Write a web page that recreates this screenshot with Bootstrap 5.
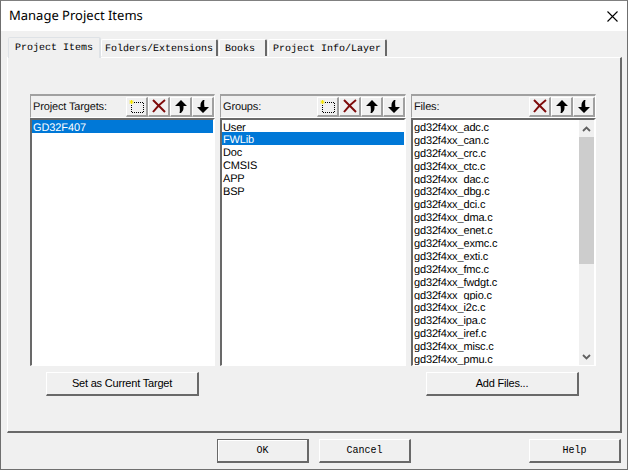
<!DOCTYPE html>
<html lang="en">
<head>
<meta charset="UTF-8">
<title>Manage Project Items</title>
<link href="https://cdn.jsdelivr.net/npm/bootstrap@5.3.0/dist/css/bootstrap.min.css" rel="stylesheet">
<style>
html, body { margin: 0; background: #f0f0f0; }
.dlg { width: 628px; height: 470px; overflow: hidden; background: #f0f0f0; border: 1px solid #6f6f6f; border-top-color: #808080; font-family: "Liberation Sans", sans-serif; font-size: 11px; letter-spacing: -.15px; text-rendering: geometricPrecision; color: #000; }
.dlg-title { height: 30px; background: #fff; font-family: "Noto Sans", sans-serif; font-size: 13px; letter-spacing: 0; padding: 0 8px; flex: none; }
.dlg-x { width: 13px; height: 13px; }
.tabbar { height: 26px; padding: 6px 0 0 7px; border: 0; flex: none; align-items: flex-end; position: relative; z-index: 1; }
.tabbar .nav-link { font-family: "Liberation Mono", monospace; font-size: 10px; letter-spacing: 0; line-height: 13px; color: #000; padding: 3px 3px 0; margin: 0 0 1px 0; height: 17px; background: #f0f0f0; border: 0; border-top: 1px solid #fff; border-left: 1px solid #fff; border-right: 2px solid #696969; border-radius: 2px 2px 0 0; white-space: pre; }
.tabbar .nav-link.active { height: 21px; margin: 0 0 -1px 0; padding: 4px 6px 0 6px; background: #f0f0f0; color: #000; }
.tabbar .tab-folders { margin-right: 1px; }
.tabbar .tab-books { padding: 3px 10px 0 5px; margin-right: 1px; }
.tabbar .tab-info { padding: 3px 4px 0; }
.tab-body { margin: 0 6px; width: 615px; height: 376px; flex: none; border-top: 1px solid #fff; border-left: 1px solid #fff; border-right: 2px solid #696969; border-bottom: 2px solid #696969; padding: 36px 0 0 22px; }
.cols { gap: 5px; }
.pane-a, .pane-c { width: 185px; }
.pane-b { width: 186px; }
.pane-head { height: 24px; border-top: 2px solid #a0a0a0; border-left: 1px solid #a0a0a0; border-right: 1px solid #fff; border-bottom: 1px solid #fff; padding-left: 2px; }
.pane-head span { color: #111; padding-top: 2px; }
.tool-btn { width: 22px; height: 20px; padding: 0; display: flex; align-items: center; justify-content: center; background: #f0f0f0; border: 0; border-top: 1px solid #fff; border-left: 1px solid #fff; border-right: 2px solid #a0a0a0; border-bottom: 2px solid #a0a0a0; border-radius: 0; }
.tool-btn svg { width: 16px; height: 16px; }
.pick-list { height: 248px; background: #fff; overflow: hidden; border-top: 2px solid #696969; border-left: 2px solid #696969; border-right: 2px solid #fff; border-bottom: 1px solid #fff; }
.pick-list .list-group { border-radius: 0; flex: 1; min-width: 0; }
.pick-list .list-group-item { border: 0; padding: 0 0 0 1px; height: 13px; line-height: 17px; color: #000; background: transparent; border-radius: 0; white-space: nowrap; overflow: hidden; }
.pick-list .list-group-item.active { background: #0078d7; color: #fff; }
.is-target .list-group-item { letter-spacing: -.1px; }
.scroll-track { width: 15px; flex: none; background: #f0f0f0; height: 100%; }
.scroll-arrow { height: 17px; }
.scroll-thumb { height: 127px; background: #cdcdcd; }
.scroll-rest { height: 84px; }
.scroll-arrow svg { width: 9px; height: 6px; }
.act-row { margin-top: 6px; }
.win-btn { height: 24px; padding: 0; font-size: 11px; letter-spacing: -.2px; color: #000; background: #f0f0f0; border: 0; border-top: 1px solid #fff; border-left: 1px solid #fff; border-right: 2px solid #696969; border-bottom: 2px solid #696969; border-radius: 0; box-shadow: none; }
.win-btn:hover { background: #f0f0f0; color: #000; }
.act-a { width: 153px; margin-left: 16px; }
.act-b { width: 153px; margin-left: 227px; }
.foot { padding: 6px 0 0 216px; }
.foot .win-btn { width: 92px; font-family: "Liberation Mono", monospace; font-size: 10px; letter-spacing: 0; }
.foot .is-default { border: 1px solid #696969; border-right-width: 2px; border-bottom-width: 2px; box-shadow: inset 1px 1px 0 #fff; }
.foot .gap-help { margin-left: 118px; }
.foot .gap-cancel { margin-left: 10px; }
</style>
</head>
<body>
<svg width="0" height="0" class="d-block" aria-hidden="true">
  <symbol id="i-new" viewBox="0 0 16 16">
    <path d="M5 4.500H15M14.500 5V15M14 14.500H3M2.500 14V7" fill="none" stroke="#000" stroke-dasharray="1 1"/>
    <path d="M2.500 2V6M.5 4H4.500M1 2.500L4 5.500M4 2.500L1 5.500" stroke="#f6e600"/>
  </symbol>
  <symbol id="i-del" viewBox="0 0 16 16">
    <path d="M2 2C5 5 10 10 14 14M14 2C10 5 5 10 2 14" fill="none" stroke="#7e0b0b" stroke-width="2"/>
  </symbol>
  <symbol id="i-up" viewBox="0 0 16 16">
    <path d="M8 2L14 8H10.500V10C10.500 12 9.500 13.500 8 15L6.500 15C7 13 7 11 6.500 8H2Z" fill="#000"/>
  </symbol>
  <symbol id="i-down" viewBox="0 0 16 16">
    <path d="M8 15L2 9H5.500V7C5.500 5 6.500 3.500 8 2L9.500 2C9 4 9 6 9.500 9H14Z" fill="#000"/>
  </symbol>
</svg>
<div class="dlg d-flex flex-column">
  <div class="dlg-title d-flex align-items-center justify-content-between">
    <span>Manage Project Items</span>
    <svg class="dlg-x" viewBox="0 0 13 13"><path d="M1.500 1.500L11.500 11.500M11.500 1.500L1.500 11.500" stroke="#000" stroke-width="1.100"/></svg>
  </div>
  <ul class="nav nav-tabs tabbar">
    <li class="nav-item"><a class="nav-link active" href="#">Project Items</a></li>
    <li class="nav-item"><a class="nav-link tab-folders" href="#">Folders/Extensions</a></li>
    <li class="nav-item"><a class="nav-link tab-books" href="#">Books</a></li>
    <li class="nav-item"><a class="nav-link tab-info" href="#">Project Info/Layer</a></li>
  </ul>
  <div class="tab-body">
    <div class="d-flex cols">
      <div class="pane-a">
        <div class="pane-head d-flex align-items-center justify-content-between">
          <span>Project Targets:</span>
          <div class="d-flex">
            <button class="btn tool-btn"><svg><use href="#i-new"/></svg></button>
            <button class="btn tool-btn"><svg><use href="#i-del"/></svg></button>
            <button class="btn tool-btn"><svg><use href="#i-up"/></svg></button>
            <button class="btn tool-btn"><svg><use href="#i-down"/></svg></button>
          </div>
        </div>
        <div class="pick-list is-target d-flex">
          <div class="list-group">
            <div class="list-group-item active">GD32F407</div>
          </div>
        </div>
      </div>
      <div class="pane-b">
        <div class="pane-head d-flex align-items-center justify-content-between">
          <span>Groups:</span>
          <div class="d-flex">
            <button class="btn tool-btn"><svg><use href="#i-new"/></svg></button>
            <button class="btn tool-btn"><svg><use href="#i-del"/></svg></button>
            <button class="btn tool-btn"><svg><use href="#i-up"/></svg></button>
            <button class="btn tool-btn"><svg><use href="#i-down"/></svg></button>
          </div>
        </div>
        <div class="pick-list d-flex">
          <div class="list-group">
            <div class="list-group-item">User</div>
            <div class="list-group-item active">FWLib</div>
            <div class="list-group-item">Doc</div>
            <div class="list-group-item">CMSIS</div>
            <div class="list-group-item">APP</div>
            <div class="list-group-item">BSP</div>
          </div>
        </div>
      </div>
      <div class="pane-c">
        <div class="pane-head d-flex align-items-center justify-content-between">
          <span>Files:</span>
          <div class="d-flex">
            <button class="btn tool-btn"><svg><use href="#i-del"/></svg></button>
            <button class="btn tool-btn"><svg><use href="#i-up"/></svg></button>
            <button class="btn tool-btn"><svg><use href="#i-down"/></svg></button>
          </div>
        </div>
        <div class="pick-list d-flex">
          <div class="list-group">
            <div class="list-group-item">gd32f4xx_adc.c</div>
            <div class="list-group-item">gd32f4xx_can.c</div>
            <div class="list-group-item">gd32f4xx_crc.c</div>
            <div class="list-group-item">gd32f4xx_ctc.c</div>
            <div class="list-group-item">gd32f4xx_dac.c</div>
            <div class="list-group-item">gd32f4xx_dbg.c</div>
            <div class="list-group-item">gd32f4xx_dci.c</div>
            <div class="list-group-item">gd32f4xx_dma.c</div>
            <div class="list-group-item">gd32f4xx_enet.c</div>
            <div class="list-group-item">gd32f4xx_exmc.c</div>
            <div class="list-group-item">gd32f4xx_exti.c</div>
            <div class="list-group-item">gd32f4xx_fmc.c</div>
            <div class="list-group-item">gd32f4xx_fwdgt.c</div>
            <div class="list-group-item">gd32f4xx_gpio.c</div>
            <div class="list-group-item">gd32f4xx_i2c.c</div>
            <div class="list-group-item">gd32f4xx_ipa.c</div>
            <div class="list-group-item">gd32f4xx_iref.c</div>
            <div class="list-group-item">gd32f4xx_misc.c</div>
            <div class="list-group-item">gd32f4xx_pmu.c</div>
          </div>
          <div class="scroll-track">
            <div class="scroll-arrow d-flex align-items-center justify-content-center"><svg viewBox="0 0 9 6"><path d="M1 5L4.500 1.500L8 5" fill="none" stroke="#606060" stroke-width="1.800"/></svg></div>
            <div class="scroll-thumb"></div>
            <div class="scroll-rest"></div>
            <div class="scroll-arrow d-flex align-items-center justify-content-center"><svg viewBox="0 0 9 6"><path d="M1 1L4.500 4.500L8 1" fill="none" stroke="#606060" stroke-width="1.800"/></svg></div>
          </div>
        </div>
      </div>
    </div>
    <div class="d-flex act-row">
      <button class="btn win-btn act-a">Set as Current Target</button>
      <button class="btn win-btn act-b">Add Files...</button>
    </div>
  </div>
  <div class="d-flex foot">
    <button class="btn win-btn is-default">OK</button>
    <button class="btn win-btn gap-cancel">Cancel</button>
    <button class="btn win-btn gap-help">Help</button>
  </div>
</div>
<script src="https://cdn.jsdelivr.net/npm/bootstrap@5.3.0/dist/js/bootstrap.bundle.min.js"></script>
</body>
</html>
